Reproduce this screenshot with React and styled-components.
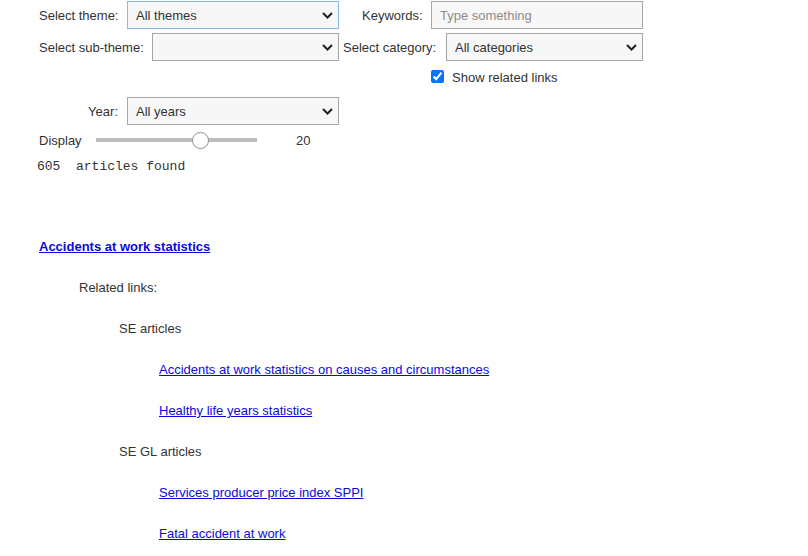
import React from 'react';
import styled, { createGlobalStyle } from 'styled-components';

const GlobalStyle = createGlobalStyle`
  body {
    margin: 0;
    background: #fff;
    font-family: "Liberation Sans", Arial, sans-serif;
    font-size: 13px;
    color: #333;
  }
`;

const Page = styled.div`
  padding: 1px 0 0 39px;
  width: 769px;
`;

const Form = styled.div`
  display: flex;
  flex-direction: column;
`;

const Row = styled.div`
  display: flex;
  align-items: center;
  height: ${({ $h }) => $h || 28}px;
  margin-top: ${({ $mt }) => $mt || 0}px;
  padding-left: ${({ $pl }) => $pl || 0}px;
`;

const Label = styled.label`
  flex: none;
  width: ${({ $w }) => $w}px;
  margin-left: ${({ $ml }) => $ml || 0}px;
  padding-right: ${({ $pr }) => $pr || 0}px;
  box-sizing: border-box;
  text-align: ${({ $align }) => $align || 'left'};
  white-space: nowrap;
`;

const SelectWrap = styled.div`
  position: relative;
  flex: none;
  width: ${({ $w }) => $w}px;
  height: 28px;
`;

const Select = styled.select`
  appearance: none;
  width: 100%;
  height: 100%;
  box-sizing: border-box;
  margin: 0;
  padding: 0 24px 0 8px;
  border: 1px solid ${({ $focus }) => ($focus ? '#8ab8e8' : '#a6a6a6')};
  border-radius: 0;
  background: #f7f7f7;
  font-family: "Liberation Sans", Arial, sans-serif;
  font-size: 13px;
  color: #333;
  outline: none;
`;

const Chevron = styled.svg`
  position: absolute;
  right: 6px;
  top: 11px;
  width: 11px;
  height: 7px;
  pointer-events: none;
`;

const TextInput = styled.input`
  flex: none;
  width: ${({ $w }) => $w}px;
  height: 28px;
  box-sizing: border-box;
  margin: 0;
  padding: 0 8px;
  border: 1px solid #a6a6a6;
  background: #f7f7f7;
  font-family: "Liberation Sans", Arial, sans-serif;
  font-size: 13px;
  color: #333;
  outline: none;

  &::placeholder {
    color: #8c8c8c;
  }
`;

const Check = styled.input`
  width: 13px;
  height: 13px;
  margin: 0 8px 0 0;
  accent-color: #0075ff;
`;

const CheckText = styled.span`
  padding-top: 3px;
`;

const Slider = styled.input`
  appearance: none;
  width: 161px;
  height: 18px;
  margin: 0;
  background: transparent;

  &::-webkit-slider-runnable-track {
    height: 4px;
    background: #bdbdbd;
  }

  &::-webkit-slider-thumb {
    appearance: none;
    width: 17px;
    height: 17px;
    margin-top: -6.5px;
    border-radius: 50%;
    border: 1px solid #8f8f8f;
    background: #fff;
    box-sizing: border-box;
  }
`;

const SliderValue = styled.span`
  margin-left: 39px;
`;

const Count = styled.div`
  height: 18px;
  line-height: 18px;
  margin-top: 9px;
  margin-left: -2px;
  font-family: "Liberation Mono", "Courier New", monospace;
  font-size: 13px;
  white-space: pre;
  color: #333;
`;

const Results = styled.div`
  margin-top: 50px;
`;

const Item = styled.div`
  height: 41px;
  line-height: 41px;
  padding-left: ${({ $level }) => $level * 40}px;
  white-space: nowrap;
`;

const Link = styled.a`
  color: #0a0ad8;
  text-decoration: underline;
  font-weight: ${({ $bold }) => ($bold ? 'bold' : 'normal')};
  cursor: pointer;
`;

const Dropdown = ({ width, value, focus }) => (
  <SelectWrap $w={width}>
    <Select $focus={focus} defaultValue={value}>
      <option value={value}>{value}</option>
    </Select>
    <Chevron viewBox="0 0 11 7">
      <path d="M1 1 L5.5 5.5 L10 1" fill="none" stroke="#222" strokeWidth="2" />
    </Chevron>
  </SelectWrap>
);

const results = [
  { level: 0, text: 'Accidents at work statistics', link: true, bold: true },
  { level: 1, text: 'Related links:' },
  { level: 2, text: 'SE articles' },
  { level: 3, text: 'Accidents at work statistics on causes and circumstances', link: true },
  { level: 3, text: 'Healthy life years statistics', link: true },
  { level: 2, text: 'SE GL articles' },
  { level: 3, text: 'Services producer price index SPPI', link: true },
  { level: 3, text: 'Fatal accident at work', link: true },
];

const App = () => {
  return (
    <Page>
      <GlobalStyle />
      <Form>
        <Row>
          <Label $w={88}>Select theme:</Label>
          <Dropdown width={212} value="All themes" focus />
          <Label $w={69} $ml={23}>Keywords:</Label>
          <TextInput $w={212} placeholder="Type something" />
        </Row>
        <Row $mt={4}>
          <Label $w={113}>Select sub-theme:</Label>
          <Dropdown width={187} value="" />
          <Label $w={103} $ml={4}>Select category:</Label>
          <Dropdown width={197} value="All categories" />
        </Row>
        <Row $mt={6} $h={18} $pl={392}>
          <Check type="checkbox" defaultChecked />
          <CheckText>Show related links</CheckText>
        </Row>
        <Row $mt={12}>
          <Label $w={88} $align="right" $pr={9}>Year:</Label>
          <Dropdown width={212} value="All years" />
        </Row>
        <Row $mt={6} $h={18}>
          <Label $w={57}>Display</Label>
          <Slider type="range" min={0} max={30} defaultValue={20} />
          <SliderValue>20</SliderValue>
        </Row>
        <Count>605  articles found</Count>
      </Form>
      <Results>
        {results.map(({ level, text, link, bold }, idx) => (
          <Item key={idx} $level={level}>
            {link ? <Link $bold={bold}>{text}</Link> : text}
          </Item>
        ))}
      </Results>
    </Page>
  );
};

export default App;
